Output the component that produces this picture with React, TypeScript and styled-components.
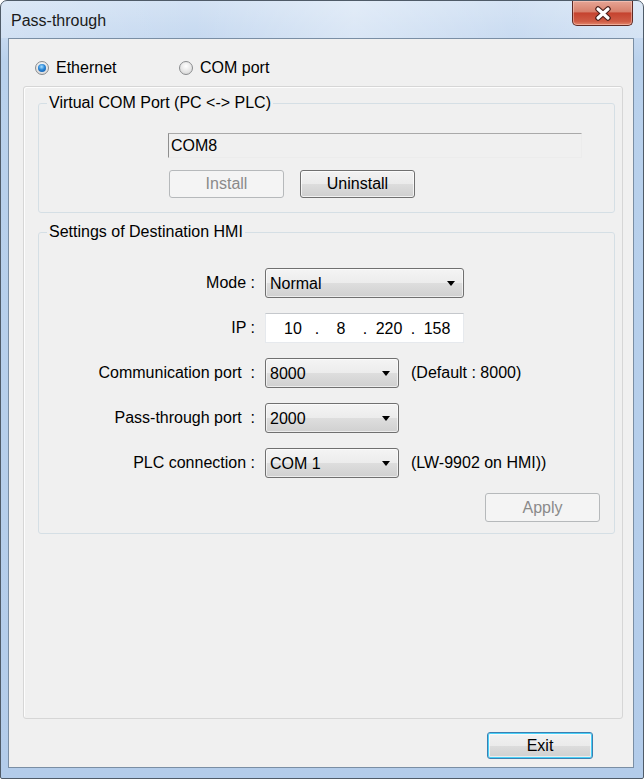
import React from 'react';
import styled, {createGlobalStyle} from 'styled-components';

const GlobalStyle = createGlobalStyle`
	html,
	body {
		margin: 0;
		padding: 0;
		background: #fff;
	}

	body {
		font-family: 'Liberation Sans', Arial, sans-serif;
		font-size: 16px;
		color: #000;
	}
`;

const Window = styled.div`
	width: 644px;
	height: 779px;
	box-sizing: border-box;
	display: flex;
	flex-direction: column;
	border: 1px solid #4f5b68;
	border-radius: 7px 7px 2px 2px;
	overflow: hidden;
	background: linear-gradient(180deg, #d3e2f4 0, #c6d9f0 37px, #b9d1ec 60px, #b3ccea 100%);
`;

const TitleBar = styled.div`
	height: 37px;
	flex: none;
	display: flex;
	justify-content: space-between;
	align-items: flex-start;
	padding: 0 10px 0 10px;
	background: linear-gradient(
		90deg,
		rgba(255, 255, 255, 0.2) 0,
		rgba(255, 255, 255, 0) 30%,
		rgba(255, 255, 255, 0.35) 55%,
		rgba(255, 255, 255, 0.05) 80%,
		rgba(255, 255, 255, 0.25) 100%
	);
`;

const Title = styled.span`
	font-size: 16px;
	line-height: 16px;
	margin-top: 12px;
	color: #1b1b1b;
`;

const CloseButton = styled.div`
	width: 61px;
	height: 25px;
	box-sizing: border-box;
	display: flex;
	align-items: center;
	justify-content: center;
	border: 1px solid #5e2a24;
	border-top: none;
	border-radius: 0 0 5px 5px;
	background: linear-gradient(180deg, #e6a595 0, #d7806c 45%, #c5432f 50%, #cf5c45 85%, #e3876c 100%);
	box-shadow: inset 0 0 0 1px rgba(255, 220, 210, 0.45);
`;

const Client = styled.div`
	flex: 1;
	margin: 0 9px 10px 7px;
	border: 1px solid #7a8ea4;
	background: #f0f0f0;
	display: flex;
	flex-direction: column;
`;

const RadioRow = styled.div`
	margin: 21px 0 0 26px;
	height: 16px;
	display: flex;
	align-items: center;
`;

const RadioItem = styled.label<{$w?: number}>`
	display: flex;
	align-items: center;
	gap: 7px;
	width: ${p => (p.$w ? `${p.$w}px` : 'auto')};
	font-size: 16px;
	line-height: 16px;
`;

const RadioDot = styled.span<{$checked?: boolean}>`
	width: 14px;
	height: 14px;
	box-sizing: border-box;
	border-radius: 50%;
	border: 1px solid #8a8c8e;
	background: radial-gradient(circle at 50% 35%, #ffffff 0, #e6e6e6 55%, #cfcfcf 100%);
	display: flex;
	align-items: center;
	justify-content: center;

	&::after {
		content: '';
		width: 8px;
		height: 8px;
		border-radius: 50%;
		background: ${p =>
			p.$checked
				? 'radial-gradient(circle at 45% 35%, #a9e0ff 0, #2a86d6 45%, #0d4f9e 100%)'
				: 'transparent'};
	}
`;

const Panel = styled.div`
	margin: 10px 0 0 14px;
	width: 600px;
	height: 633px;
	box-sizing: border-box;
	padding: 7px 7px 0 14px;
	border: 1px solid #d6d6d6;
	border-radius: 3px;
	box-shadow: inset 1px 1px 0 #fdfdfd;
	display: flex;
	flex-direction: column;
	gap: 10px;
`;

const Group = styled.fieldset<{$h: number}>`
	margin: 0;
	padding: 0;
	min-width: 0;
	height: ${p => p.$h}px;
	box-sizing: border-box;
	border: 1px solid #d5dfe5;
	border-radius: 3px;
`;

const Legend = styled.legend`
	margin-left: 8px;
	padding: 0 2px;
	font-size: 16px;
	line-height: 18px;
`;

const ReadOnlyField = styled.div`
	margin: 21px 0 0 129px;
	width: 414px;
	height: 25px;
	box-sizing: border-box;
	padding-left: 2px;
	border: 1px solid;
	border-color: #a9a9a9 #ececec #ececec #8f8f8f;
	font-size: 16px;
	line-height: 23px;
`;

const ButtonRow = styled.div`
	margin: 12px 0 0 130px;
	display: flex;
	gap: 16px;
`;

const Button = styled.button<{$w: number; $h?: number; $disabled?: boolean; $default?: boolean}>`
	width: ${p => p.$w}px;
	height: ${p => p.$h ?? 28}px;
	box-sizing: border-box;
	padding: 0;
	font-family: 'Liberation Sans', Arial, sans-serif;
	font-size: 16px;
	border-radius: 3px;
	color: ${p => (p.$disabled ? '#8a8a8a' : '#000')};
	border: 1px solid ${p => (p.$disabled ? '#b6b9bb' : p.$default ? '#3c7fb1' : '#707070')};
	background: ${p =>
		p.$disabled
			? '#f4f4f4'
			: 'linear-gradient(180deg, #f2f2f2 0, #ebebeb 50%, #dddddd 50%, #cfcfcf 100%)'};
	box-shadow: ${p =>
		p.$default
			? 'inset 0 0 0 1px #48d0f8, inset 0 0 0 2px rgba(255,255,255,0.6)'
			: p.$disabled
				? 'none'
				: 'inset 0 0 0 1px rgba(255,255,255,0.7)'};
`;

const FormGrid = styled.div`
	margin-top: 27px;
	display: grid;
	grid-template-columns: 216px auto;
	grid-auto-rows: 30px;
	column-gap: 10px;
	row-gap: 15px;
	align-items: center;
`;

const Label = styled.div`
	text-align: right;
	font-size: 16px;
	line-height: 18px;
	white-space: pre;
`;

const ControlCell = styled.div`
	display: flex;
	align-items: center;
	gap: 12px;
	height: 100%;
`;

const Select = styled.div<{$w: number}>`
	width: ${p => p.$w}px;
	height: 30px;
	box-sizing: border-box;
	display: flex;
	align-items: center;
	justify-content: space-between;
	padding: 2px 8px 0 4px;
	border: 1px solid #707070;
	border-radius: 3px;
	background: linear-gradient(180deg, #f4f4f4 0, #ececec 50%, #dedede 50%, #d0d0d0 100%);
	box-shadow: inset 0 0 0 1px rgba(255, 255, 255, 0.6);
	font-size: 16px;
`;

const Arrow = styled.span`
	width: 0;
	height: 0;
	border-left: 4px solid transparent;
	border-right: 4px solid transparent;
	border-top: 5px solid #000;
	margin-top: -2px;
`;

const IpField = styled.div`
	width: 199px;
	height: 30px;
	box-sizing: border-box;
	display: flex;
	align-items: center;
	padding: 1px 0 0 7px;
	background: #fff;
	border: 1px solid #e6e9ed;
	border-top-color: #c5c8cc;
	font-size: 16px;
`;

const Octet = styled.span`
	width: 40px;
	text-align: center;
`;

const Dot = styled.span`
	width: 8px;
	text-align: center;
`;

const Note = styled.span`
	font-size: 16px;
`;

const ApplyRow = styled.div`
	margin-top: 15px;
	padding-right: 14px;
	display: flex;
	justify-content: flex-end;
`;

const ExitRow = styled.div`
	margin-top: 13px;
	padding-right: 40px;
	display: flex;
	justify-content: flex-end;
`;

const CloseGlyph = () => (
	<svg width="20" height="15" viewBox="0 0 20 15">
		<path d="M5 3 L15 12 M15 3 L5 12" stroke="#4a1f1a" strokeWidth="5.5" strokeLinecap="round" />
		<path d="M5 3 L15 12 M15 3 L5 12" stroke="#fff" strokeWidth="3.2" strokeLinecap="round" />
	</svg>
);

const rows: {label: string; value: string; width: number; note?: string}[] = [
	{label: 'Communication port  :', value: '8000', width: 134, note: '(Default : 8000)'},
	{label: 'Pass-through port  :', value: '2000', width: 134},
	{label: 'PLC connection :', value: 'COM 1', width: 134, note: '(LW-9902 on HMI))'},
];

export default function App() {
	return (
		<>
			<GlobalStyle />
			<Window>
				<TitleBar>
					<Title>Pass-through</Title>
					<CloseButton>
						<CloseGlyph />
					</CloseButton>
				</TitleBar>
				<Client>
					<RadioRow>
						<RadioItem $w={144}>
							<RadioDot $checked />
							Ethernet
						</RadioItem>
						<RadioItem>
							<RadioDot />
							COM port
						</RadioItem>
					</RadioRow>
					<Panel>
						<Group $h={119}>
							<Legend>Virtual COM Port (PC &lt;-&gt; PLC)</Legend>
							<ReadOnlyField>COM8</ReadOnlyField>
							<ButtonRow>
								<Button $w={115} $disabled>
									Install
								</Button>
								<Button $w={115}>Uninstall</Button>
							</ButtonRow>
						</Group>
						<Group $h={311}>
							<Legend>Settings of Destination HMI</Legend>
							<FormGrid>
								<Label>Mode :</Label>
								<ControlCell>
									<Select $w={199}>
										Normal
										<Arrow />
									</Select>
								</ControlCell>
								<Label>IP :</Label>
								<ControlCell>
									<IpField>
										<Octet>10</Octet>
										<Dot>.</Dot>
										<Octet>8</Octet>
										<Dot>.</Dot>
										<Octet>220</Octet>
										<Dot>.</Dot>
										<Octet>158</Octet>
									</IpField>
								</ControlCell>
								{rows.map(r => (
									<React.Fragment key={r.label}>
										<Label>{r.label}</Label>
										<ControlCell>
											<Select $w={r.width}>
												{r.value}
												<Arrow />
											</Select>
											{r.note && <Note>{r.note}</Note>}
										</ControlCell>
									</React.Fragment>
								))}
							</FormGrid>
							<ApplyRow>
								<Button $w={115} $h={29} $disabled>
									Apply
								</Button>
							</ApplyRow>
						</Group>
					</Panel>
					<ExitRow>
						<Button $w={106} $h={27} $default>
							Exit
						</Button>
					</ExitRow>
				</Client>
			</Window>
		</>
	);
}
